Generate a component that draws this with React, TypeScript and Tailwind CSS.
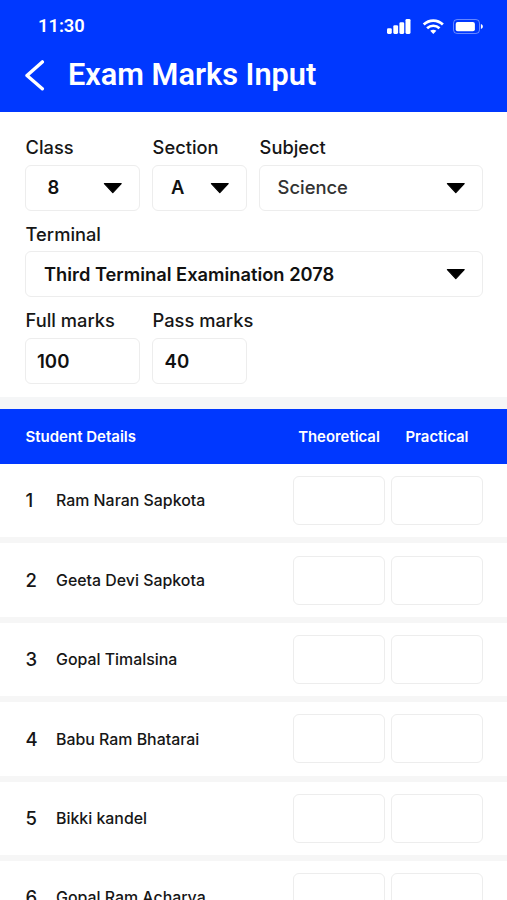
import React from "react";

const students = [
  "Ram Naran Sapkota",
  "Geeta Devi Sapkota",
  "Gopal Timalsina",
  "Babu Ram Bhatarai",
  "Bikki kandel",
  "Gopal Ram Acharya",
];

function Caret() {
  return (
    <svg width="20" height="12" viewBox="0 0 20 12" className="shrink-0">
      <path d="M1.4 1.6H18.2L9.8 10.6Z" fill="#000" stroke="#000" strokeWidth="1.2" strokeLinejoin="round" />
    </svg>
  );
}

function Field({
  label,
  value,
  className,
  valueClass,
  caret = true,
}: {
  label: string;
  value: string;
  className: string;
  valueClass: string;
  caret?: boolean;
}) {
  return (
    <div className={className}>
      <div className="flex h-[30px] items-center whitespace-nowrap pl-[0.6px] text-[18.3px] font-[450] leading-none text-[#161616]">
        {label}
      </div>
      <div className="mt-[2.7px] flex h-[46px] items-center justify-between rounded-[6px] border border-[#ededed] bg-white pr-[16px]">
        <span className={`whitespace-nowrap leading-none ${valueClass}`}>{value}</span>
        {caret && <Caret />}
      </div>
    </div>
  );
}

function StatusIcons() {
  return (
    <svg width="98" height="20" viewBox="0 0 98 20" fill="none">
      <g fill="#fff">
        <rect x="1" y="12.3" width="4.8" height="5.6" rx="1.3" />
        <rect x="7.3" y="9.2" width="4.8" height="8.7" rx="1.3" />
        <rect x="13.4" y="6.3" width="4.8" height="11.6" rx="1.3" />
        <rect x="19.5" y="2.9" width="5" height="15" rx="1.3" />
      </g>
      <g stroke="#fff" strokeWidth="2.7">
        <path d="M37.7 8.5C43.2 3.2 51.4 3.2 56.9 8.5" />
        <path d="M41.1 12.2C44.6 8.9 50 8.9 53.5 12.2" />
      </g>
      <path d="M44.2 14.8C46 13.3 48.6 13.3 50.4 14.8L47.3 18Z" fill="#fff" />
      <rect x="67.5" y="3.5" width="26" height="14" rx="3.6" stroke="#fff" strokeOpacity=".4" />
      <rect x="69.7" y="6" width="19.2" height="9.2" rx="2" fill="#fff" />
      <path d="M94.9 8C97.5 8.8 97.5 12.2 94.9 13Z" fill="#fff" />
    </svg>
  );
}

export default function App() {
  return (
    <div className="h-[900px] w-[507px] overflow-hidden bg-white font-['Inter',sans-serif]">
      <header className="h-[112px] bg-[#0038ff] text-white">
        <div className="flex h-[52px] items-center justify-between pl-[38px] pr-[23px] font-['Roboto',sans-serif]">
          <span className="pt-px text-[18.3px] font-semibold leading-none">11:30</span>
          <StatusIcons />
        </div>
        <div className="flex h-[46px] items-center pl-[24px]">
          <svg width="22" height="32" viewBox="0 0 22 32" fill="none">
            <path d="M18.3 2.9L3 16.5L18.3 29.8" stroke="#fff" strokeWidth="3.4" strokeLinecap="round" strokeLinejoin="round" />
          </svg>
          <h1 className="ml-[22px] whitespace-nowrap font-['Roboto',sans-serif] text-[30.7px] font-semibold leading-none">
            Exam Marks Input
          </h1>
        </div>
      </header>

      <section className="flex h-[285px] flex-col gap-2 pl-[25px] pt-[20px]">
        <div className="flex gap-[12px]">
          <Field label="Class" value="8" className="w-[115px]" valueClass="pl-[21.5px] text-[18.4px] font-semibold text-[#111]" />
          <Field label="Section" value="A" className="w-[95px]" valueClass="pl-[18px] text-[18.4px] font-semibold text-[#111]" />
          <Field label="Subject" value="Science" className="w-[224px]" valueClass="pl-[17.5px] text-[18.4px] font-[550] text-[#333]" />
        </div>
        <Field
          label="Terminal"
          value="Third Terminal Examination 2078"
          className="w-[458px]"
          valueClass="pl-[18px] text-[18.3px] font-semibold text-[#111]"
        />
        <div className="flex gap-[12px]">
          <Field label="Full marks" value="100" caret={false} className="w-[115px]" valueClass="pl-[11px] text-[18.6px] font-semibold text-[#111]" />
          <Field label="Pass marks" value="40" caret={false} className="w-[95px]" valueClass="pl-[11.5px] text-[18.6px] font-semibold text-[#111]" />
        </div>
      </section>

      <div className="h-[12px] bg-[#f5f6f7]" />

      <div className="flex h-[55px] items-center bg-[#0038ff] pl-[25.5px] pr-[24px] pt-px text-[14.9px] leading-none text-white">
        <span className="flex-1 pb-px text-[15px] font-semibold">Student Details</span>
        <span className="w-[92px] text-center font-[560]">Theoretical</span>
        <span className="ml-[6px] w-[92px] text-center font-[560]">Practical</span>
      </div>

      <ul>
        {students.map((name) => (
          <li key={name} className="flex h-[79.4px] items-center border-b-6 border-[#f6f6f6] pl-[25.5px] pr-[24px] text-[#161616]">
            <span className="w-[30.5px] text-[18.5px] font-[450] leading-none">{students.indexOf(name) + 1}</span>
            <span className="flex-1 whitespace-nowrap pt-[1.4px] text-[15.9px] font-[450] leading-none">{name}</span>
            <span className="h-[49px] w-[92px] rounded-[6px] border border-[#ededed]" />
            <span className="ml-[6px] h-[49px] w-[92px] rounded-[6px] border border-[#ededed]" />
          </li>
        ))}
      </ul>
    </div>
  );
}
